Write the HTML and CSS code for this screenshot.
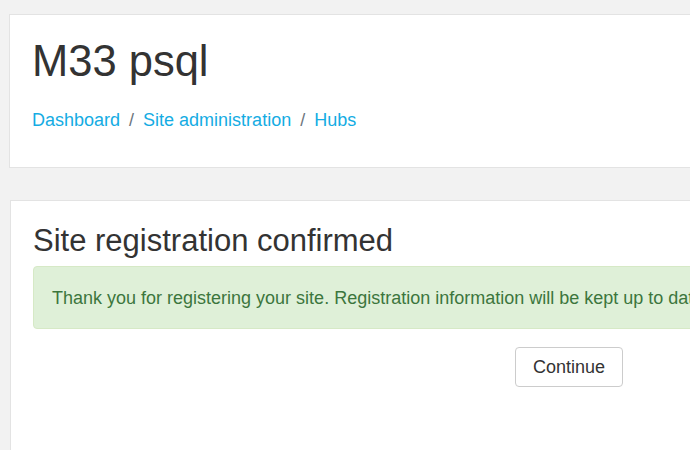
FILE: index.html
```html
<!DOCTYPE html>
<html lang="en">
<head>
<meta charset="utf-8">
<title>M33 psql: Site registration confirmed</title>
<link rel="stylesheet" href="styles.css">
</head>
<body>
<div class="page">
  <header class="card header-card">
    <h1 class="site-title">M33 psql</h1>
    <nav class="breadcrumb">
      <a href="#">Dashboard</a>
      <span class="sep">/</span>
      <a href="#">Site administration</a>
      <span class="sep">/</span>
      <a href="#">Hubs</a>
    </nav>
  </header>
  <main class="card main-card">
    <h2 class="page-heading">Site registration confirmed</h2>
    <div class="alert-success">Thank you for registering your site. Registration information will be kept up to date by the 'Site registration' scheduled task.</div>
    <div class="buttons">
      <button class="btn" type="button">Continue</button>
    </div>
  </main>
</div>
</body>
</html>
```

FILE: styles.css
```css
html, body {
  margin: 0;
  padding: 0;
  background: #f2f2f2;
  overflow: hidden;
}
body {
  font-family: "Liberation Sans", Arial, sans-serif;
  font-size: 18px;
  line-height: 27px;
  color: #333;
}
.page {
  width: 1140px;
  padding-top: 14px;
}
.card {
  background: #fff;
  border: 1px solid #e3e3e3;
}
.header-card {
  margin-left: 9px;
  width: 1096px;
  padding: 20px 22px 33px 22px;
}
.site-title {
  margin: 0;
  font-weight: normal;
  font-size: 43.5px;
  line-height: 53px;
  color: #333;
}
.breadcrumb {
  margin-top: 19px;
  display: flex;
  white-space: nowrap;
}
.breadcrumb a {
  color: #14ace3;
  text-decoration: none;
}
.breadcrumb .sep {
  color: #6c757d;
  padding: 0 9px;
}
.main-card {
  margin-top: 32px;
  margin-left: 10px;
  width: 1072px;
  padding: 21px 22px 200px 22px;
}
.page-heading {
  margin: 0 0 7px 0;
  font-weight: normal;
  font-size: 31px;
  line-height: 37px;
  color: #333;
}
.alert-success {
  background: #dff0d8;
  border: 1px solid #d6e9c6;
  border-radius: 4px;
  color: #3c763d;
  padding: 18px 18px 16px 18px;
  white-space: nowrap;
  overflow: hidden;
}
.buttons {
  margin-top: 18px;
  display: flex;
  justify-content: center;
}
.btn {
  font-family: "Liberation Sans", Arial, sans-serif;
  font-size: 18px;
  line-height: 27px;
  color: #333;
  background: #fff;
  border: 1px solid #ccc;
  border-radius: 4px;
  padding: 6px 17px 5px 17px;
  height: 40px;
}
```
